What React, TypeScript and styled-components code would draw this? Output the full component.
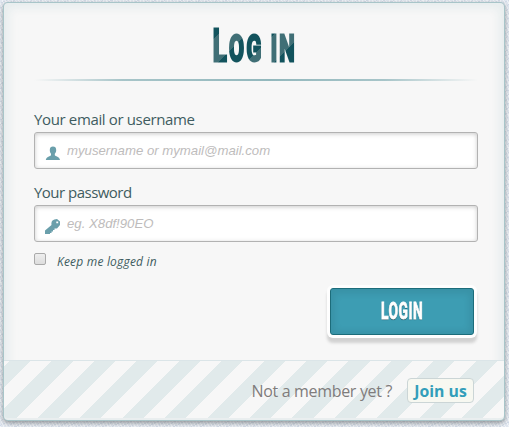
import React from "react";
import styled, { createGlobalStyle } from "styled-components";

const GlobalStyle = createGlobalStyle`
  *, *::before, *::after { box-sizing: border-box; }
  html, body { margin: 0; height: 427px; overflow: hidden; }
  body {
    background-color: #e2e8f1;
    background-image:
      repeating-linear-gradient(63deg, rgba(255, 255, 255, 0.55) 0 1px, transparent 1px 3px),
      repeating-linear-gradient(-27deg, rgba(190, 203, 220, 0.4) 0 1px, transparent 1px 4px);
    font-family: "Open Sans", "Noto Sans", sans-serif;
  }
`;

const Card = styled.main`
  display: flex;
  flex-direction: column;
  width: 502px;
  height: 419px;
  margin: 2px 0 0 3px;
  padding-bottom: 2px;
  background: #f7f7f7;
  border: 1px solid rgba(147, 184, 189, 0.8);
  border-radius: 5px;
  box-shadow: 0 2px 5px rgba(105, 108, 109, 0.7), 0 0 8px 5px rgba(208, 223, 226, 0.4) inset;
`;

const Form = styled.form`
  display: flex;
  flex-direction: column;
  height: 357px;
  padding: 0 26px 0 30px;
`;

const Header = styled.header`
  display: flex;
  flex-direction: column;
  align-items: center;
  height: 78px;
  flex: none;
  padding-top: 14px;
`;

/* The condensed title is squeezed horizontally; the stripe angle and period
   are corrected so that the stripes still run at 45 degrees. */
const SCALE = 0.58;
const RATIO = Math.SQRT2 / Math.sqrt(SCALE * SCALE + 1);
const ANGLE = (-Math.atan(SCALE) * 180) / Math.PI;

const Title = styled.h1`
  margin: 0;
  width: 306px;
  height: 60px;
  flex: none;
  padding-left: 78.5px;
  white-space: nowrap;
  font: 700 37.5px/59px Roboto, sans-serif;
  letter-spacing: 4px;
  word-spacing: -1px;
  color: transparent;
  -webkit-text-stroke: 3px transparent;
  transform: scaleX(${SCALE});
  background: repeating-linear-gradient(
    ${ANGLE}deg,
    rgb(18, 83, 93) 0,
    rgb(18, 83, 93) ${20 * RATIO}px,
    rgb(64, 111, 118) ${20 * RATIO}px,
    rgb(64, 111, 118) ${40 * RATIO}px
  );
  background-clip: text;
  -webkit-background-clip: text;
`;

const Initial = styled.span`
  font-size: 44.5px;
`;

const Rule = styled.div`
  width: 444px;
  height: 2px;
  flex: none;
  margin-top: 2px;
  background: linear-gradient(
    to right,
    rgba(147, 184, 189, 0) 0%,
    rgba(147, 184, 189, 0.8) 20%,
    rgba(147, 184, 189, 1) 53%,
    rgba(147, 184, 189, 0.8) 79%,
    rgba(147, 184, 189, 0) 100%
  );
`;

const Field = styled.div<{ $top: number }>`
  display: flex;
  flex-direction: column;
  width: 444px;
  margin-top: ${(p) => p.$top}px;
`;

const Label = styled.label<{ $spacing: number }>`
  height: 25px;
  line-height: 24px;
  font-size: 15px;
  letter-spacing: ${(p) => p.$spacing}px;
  color: rgb(64, 92, 96);
`;

const InputBox = styled.div`
  display: flex;
  align-items: center;
  height: 37px;
  padding-left: 10px;
  background: #fff;
  border: 1px solid rgb(178, 178, 178);
  border-radius: 3px;
  box-shadow: 0 1px 4px 0 rgba(168, 168, 168, 0.6) inset;
`;

const Input = styled.input`
  flex: 1;
  height: 33px;
  margin-left: 6px;
  padding: 0;
  border: 0;
  outline: 0;
  background: transparent;
  font: italic 13.2px "Liberation Sans", Arial, sans-serif;
  &::placeholder { color: rgb(190, 188, 188); opacity: 1; }
`;

const Keep = styled.label`
  display: flex;
  align-items: center;
  gap: 11px;
  height: 18px;
  margin-top: 10px;
  font-size: 12px;
  letter-spacing: 0.2px;
  font-style: italic;
  color: rgb(64, 92, 96);
`;

const Check = styled.input`
  appearance: none;
  width: 12px;
  height: 12px;
  margin: -4px 0 0;
  border: 1px solid #aaa;
  border-radius: 2px;
  background: linear-gradient(#eee, #ddd);
`;

const Submit = styled.button`
  align-self: flex-end;
  width: 144px;
  height: 47px;
  margin: 18px 4px 0 0;
  padding: 0;
  border: 1px solid rgb(28, 108, 122);
  border-radius: 3px;
  background: rgb(61, 157, 179);
  color: #fff;
  font: 700 23px/43px Roboto, sans-serif;
  text-shadow: 0 1px 1px rgba(0, 0, 0, 0.6);
  box-shadow: 0 1px 6px 4px rgba(0, 0, 0, 0.07) inset, 0 0 0 3px rgb(254, 254, 254),
    0 5px 3px 3px rgb(210, 210, 210);
`;

const Narrow = styled.span`
  display: inline-block;
  -webkit-text-stroke: 0.8px #fff;
  letter-spacing: 0.8px;
  transform: scaleX(0.6);
`;

const Footer = styled.footer`
  display: flex;
  align-items: center;
  justify-content: flex-end;
  height: 58px;
  padding: 2px 30px 0 0;
  border-top: 1px solid rgb(219, 229, 232);
  border-radius: 0 0 4px 4px;
  font-size: 16px;
  color: rgb(127, 124, 124);
  background: repeating-linear-gradient(
    -45deg,
    rgb(247, 247, 247) 0,
    rgb(247, 247, 247) 15px,
    rgb(225, 234, 235) 15px,
    rgb(225, 234, 235) 30px
  );
`;

const Question = styled.span`
  letter-spacing: -0.33px;
`;

const Join = styled.a`
  display: flex;
  align-items: center;
  justify-content: center;
  width: 67px;
  height: 25px;
  margin-left: 15px;
  border: 1px solid rgb(203, 213, 214);
  border-radius: 4px;
  background: rgb(247, 248, 241);
  color: rgb(50, 158, 186);
  font-size: 15.8px;
  font-weight: 700;
`;

const Icon = styled.svg`
  width: 16px;
  height: 16px;
  flex: none;
  margin-top: 7px;
  fill: #6a9fab;
`;

export default function App() {
  return (
    <>
      <GlobalStyle />
      <Card>
        <Form>
          <Header>
            <Title><Initial>L</Initial>OG IN</Title>
            <Rule />
          </Header>
          <Field $top={26}>
            <Label $spacing={-0.36} htmlFor="user">Your email or username</Label>
            <InputBox>
              <Icon viewBox="0 0 16 16">
                <path d="M8 0.5c2 0 3.2 1.2 3.2 3.4 0 1.7-.6 3-1.4 3.8v1.500c.3 1 4.900 1.300 5.200 4.800H.8c.3-3.500 4.900-3.800 5.200-4.800V7.700C5.300 6.900 4.800 5.600 4.800 3.900 4.800 1.700 6 .5 8 .5z" />
              </Icon>
              <Input id="user" placeholder="myusername or mymail@mail.com" />
            </InputBox>
          </Field>
          <Field $top={11}>
            <Label $spacing={-0.52} htmlFor="pass">Your password</Label>
            <InputBox>
              <Icon viewBox="0 0 16 16">
                <path fillRule="evenodd" d="M7.500 1.500Q9 0 12 0L15 2.500V6L12 9.500H9.500V11H8V12.500H6.500V14H5V15H-.5V12L6.500 6Q6 3 7.500 1.500zM11.300 2.500V4.300H13.200V2.500z" />
              </Icon>
              <Input id="pass" placeholder="eg. X8df!90EO" />
            </InputBox>
          </Field>
          <Keep><Check type="checkbox" /><span>Keep me logged in</span></Keep>
          <Submit type="button"><Narrow>LOGIN</Narrow></Submit>
        </Form>
        <Footer>
          <Question>Not a member yet ?</Question>
          <Join>Join us</Join>
        </Footer>
      </Card>
    </>
  );
}
